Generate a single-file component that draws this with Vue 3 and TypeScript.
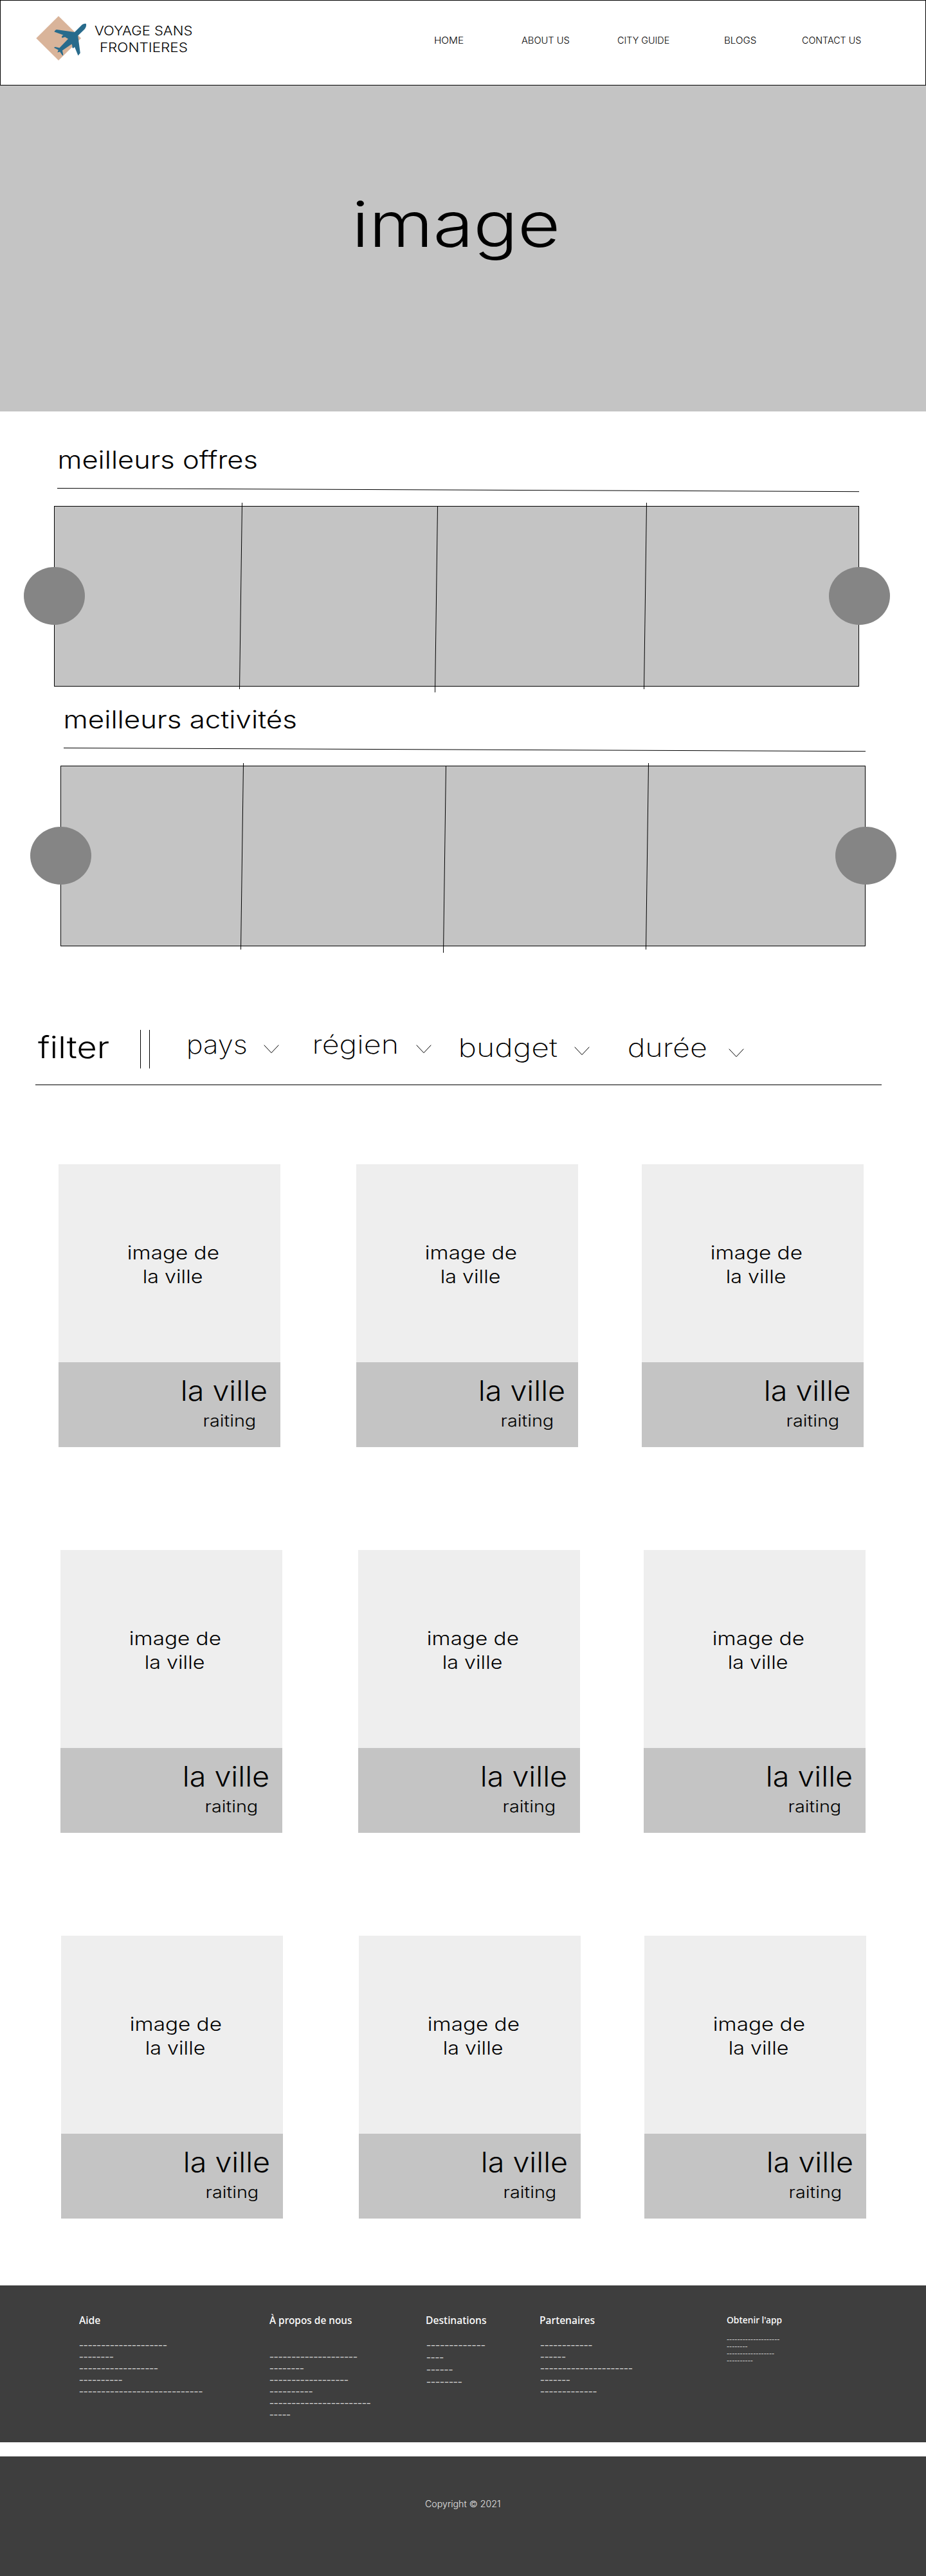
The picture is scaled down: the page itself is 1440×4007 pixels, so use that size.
<script setup lang="ts">
import type { Directive } from 'vue'

// Stretches a line of text so that its ink spans exactly the given width.
const vFit: Directive<HTMLElement, number> = {
  mounted(el, binding) {
    const ctx = document.createElement('canvas').getContext('2d')
    if (!ctx) return
    const cs = getComputedStyle(el)
    ctx.font = `${cs.fontWeight} ${cs.fontSize} ${cs.fontFamily}`
    const m = ctx.measureText((el.textContent ?? '').trim())
    const ink = m.actualBoundingBoxLeft + m.actualBoundingBoxRight
    const scale = binding.value / ink
    el.style.width = `${binding.value}px`
    el.style.transform = `translateX(${m.actualBoundingBoxLeft * scale}px) scaleX(${scale})`
  },
}

interface Line { x1: number; y1: number; x2: number; y2: number }
interface Carousel { id: string; title: string; width: number; lines: Line[] }

const nav = [
  { id: 'home', label: 'HOME', width: 45 },
  { id: 'about', label: 'ABOUT US', width: 74 },
  { id: 'guide', label: 'CITY GUIDE', width: 81 },
  { id: 'blogs', label: 'BLOGS', width: 48.5 },
  { id: 'contact', label: 'CONTACT US', width: 91.5 },
]

const carousels: Carousel[] = [
  {
    id: 'offers', title: 'meilleurs offres', width: 306,
    lines: [
      { x1: 292.5, y1: 5, x2: 288.5, y2: 295 },
      { x1: 596.5, y1: 10, x2: 592.5, y2: 300 },
      { x1: 921.5, y1: 5, x2: 917.5, y2: 295 },
    ],
  },
  {
    id: 'activities', title: 'meilleurs activités', width: 358,
    lines: [
      { x1: 284.5, y1: 6, x2: 280.5, y2: 296 },
      { x1: 599.5, y1: 11, x2: 595.5, y2: 301 },
      { x1: 914.5, y1: 6, x2: 910.5, y2: 296 },
    ],
  },
]

const filters = [
  { id: 'country', label: 'pays', width: 89.5 },
  { id: 'region', label: 'régien', width: 127 },
  { id: 'budget', label: 'budget', width: 150 },
  { id: 'duration', label: 'durée', width: 119.5 },
]

const footer = [
  { id: 'help', title: 'Aide', width: 33.5, pitch: 6.93, gap: 2, rows: [20, 8, 18, 10, 28] },
  { id: 'us', title: 'À propos de nous', width: 128, pitch: 6.93, gap: 2, rows: [20, 8, 18, 10, 23, 5] },
  { id: 'places', title: 'Destinations', width: 93, pitch: 7.2, gap: 2, rows: [13, 4, 6, 8] },
  { id: 'partners', title: 'Partenaires', width: 84.5, pitch: 6.93, gap: 2, rows: [12, 6, 21, 7, 13] },
  { id: 'app', title: "Obtenir l'app", width: 85.5, pitch: 4.16, gap: 1, rows: [20, 8, 18, 10] },
]
</script>

<template>
  <div class="page">
    <header class="top">
      <svg class="logo" width="80" height="72" viewBox="56 24 80 72">
        <path fill="#d9b49a" d="M91 25 126 59.5 91 94 56.300 59.5Z" />
        <path
          fill="#286b8c"
          d="M133.900 37.300C132.500 36.300 129 37 126.500 39.500L116 50 88 46C86 46.500 85 48 84.500 49.500L98.500 54.500C96 55.500 95.500 57.500 96.500 59L101 57.500 106 60.500 92.500 74.500 86 73C84.800 73.200 84.300 73.800 84 74.300L90.800 77.800 89.300 81.500 93.200 80.500 97.300 86.600 98.300 85.500 97 78.500 111.500 68.500 112.500 71.500C112 73.500 112.500 75 114 75L116 73 121.500 86.500 124.800 82.500 121.200 55.500 131.500 45.500C134 42.500 134.500 39.500 133.900 37.300Z"
        />
      </svg>
      <div class="brand">
        <span v-fit="151.5">VOYAGE SANS</span>
        <span v-fit="135" class="second">FRONTIERES</span>
      </div>
      <nav class="nav">
        <a v-for="n in nav" :key="n.id" v-fit="n.width" :class="n.id">{{ n.label }}</a>
      </nav>
    </header>

    <section class="hero"><h1 v-fit="312">image</h1></section>

    <section v-for="c in carousels" :key="c.id" class="carousel" :class="c.id">
      <h2 v-fit="c.width">{{ c.title }}</h2>
      <svg class="rule" width="1247" height="7"><line x1="0" y1="0.5" x2="1247" y2="5.700" stroke="#000" /></svg>
      <div class="track">
        <svg class="dividers" width="1252" height="310">
          <line v-for="(l, i) in c.lines" :key="i" v-bind="l" stroke="#000" />
        </svg>
        <i class="knob left"></i>
        <i class="knob right"></i>
      </div>
    </section>

    <section class="filters">
      <h3 v-fit="110">filter</h3>
      <div class="bars"></div>
      <div v-for="f in filters" :key="f.id" class="filter" :class="f.id">
        <span v-fit="f.width">{{ f.label }}</span>
        <svg width="24" height="14" viewBox="0 0 24 14"><path d="M.7.7 12 12.700 23.300.7" fill="none" stroke="#000" /></svg>
      </div>
    </section>

    <section v-for="row in 3" :key="row" class="cities" :class="'row' + row">
      <article v-for="col in 3" :key="col" class="city">
        <div class="photo">
          <span v-fit="141">image de</span>
          <span v-fit="90.5">la ville</span>
        </div>
        <div class="caption">
          <strong v-fit="130">la ville</strong>
          <small v-fit="78.5">raiting</small>
        </div>
      </article>
    </section>

    <footer class="links">
      <div v-for="c in footer" :key="c.id" class="col" :class="c.id">
        <h4 v-fit="c.width">{{ c.title }}</h4>
        <p v-for="(n, i) in c.rows" :key="i" v-fit="n * c.pitch - c.gap">{{ '-'.repeat(n) }}</p>
      </div>
    </footer>
    <div class="copyright"><span v-fit="117">Copyright © 2021</span></div>
  </div>
</template>

<style>
body { margin: 0; background: #fff; }
</style>

<style scoped>
.page {
  width: 1440px;
  height: 4007px;
  overflow: hidden;
  display: flex;
  flex-direction: column;
  font-family: Inter, "Open Sans", sans-serif;
  font-kerning: normal;
  color: #000;
}
h1, h2, h3, h4, p { margin: 0; font-weight: 400; }
h1, h2, h3, h4, p, span, a, strong, small {
  display: block;
  flex: none;
  white-space: nowrap;
  transform-origin: 0 50%;
}

.top {
  box-sizing: border-box;
  height: 133px;
  border: 1px solid #000;
  display: flex;
  flex: none;
}
.logo { margin: 23px 0 0 55px; flex: none; }
.brand { margin: 34px 0 0 11px; width: 152px; font-size: 20.2px; line-height: 26px; font-weight: 300; flex: none; }
.brand .second { margin-left: 9px; }
.nav { display: flex; margin: 52px 0 0 377px; font-size: 13.8px; line-height: 20px; font-weight: 300; }
.about { margin-left: 89.500px; }
.guide { margin-left: 75px; }
.blogs { margin-left: 86.500px; }
.contact { margin-left: 71px; }

.hero {
  height: 507px;
  flex: none;
  background: #c4c4c4;
  padding-left: 554px;
  box-sizing: border-box;
}
.hero h1 { padding-top: 156px; font-size: 97.6px; line-height: 120px; font-weight: 300; }

.carousel { flex: none; }
.offers { padding-top: 55px; }
.activities { padding: 31px 0 0 10px; }
.carousel h2 { margin-left: 93px; font-size: 38px; line-height: 40px; font-weight: 300; }
.activities h2 { margin-left: 91.500px; }
.rule { display: block; margin: 24px 0 21px 89px; }
.track {
  position: relative;
  box-sizing: border-box;
  margin-left: 84px;
  width: 1252px;
  height: 281px;
  border: 1px solid #000;
  background: #c4c4c4;
}
.dividers { position: absolute; left: -1px; top: -11px; }
.knob { position: absolute; top: 94px; width: 95px; height: 90px; border-radius: 50%; background: #858585; }
.knob.left { left: -48px; }
.knob.right { right: -49px; }

.filters {
  display: flex;
  flex: none;
  box-sizing: border-box;
  width: 1316px;
  height: 86px;
  margin: 130px 0 0 55px;
  padding-left: 4px;
  border-bottom: 1px solid #000;
}
.filters h3 { font-size: 47px; line-height: 54px; font-weight: 300; }
.bars { box-sizing: border-box; width: 15px; height: 60px; margin-left: 49px; border: solid #000; border-width: 0 1px; }
.filter { display: flex; align-items: flex-start; font-size: 40px; line-height: 46px; font-weight: 200; }
.filter svg { margin-top: 23px; }
.country { margin-left: 60px; }
.country svg { margin-left: 27px; }
.region { margin-left: 55px; }
.region svg { margin-left: 31px; }
.budget { margin-left: 45px; padding-top: 5px; }
.budget svg { margin: 21px 0 0 27px; }
.duration { margin-left: 61px; padding-top: 5px; }
.duration svg { margin: 24px 0 0 36px; }

.cities { display: flex; flex: none; }
.row1 { margin: 123px 0 0 91px; }
.row2 { margin: 160px 0 0 94px; }
.row3 { margin: 160px 0 0 95px; }
.city { width: 345px; flex: none; }
.city:nth-child(2) { margin-left: 118px; }
.city:nth-child(3) { margin-left: 99px; }
.photo {
  box-sizing: border-box;
  height: 308px;
  padding: 119px 0 0 12px;
  background: #eee;
  display: flex;
  flex-direction: column;
  align-items: center;
  font-size: 29px;
  line-height: 37px;
  font-weight: 300;
}
.caption {
  box-sizing: border-box;
  height: 132px;
  padding: 19px 22px 0 0;
  background: #c4c4c4;
  display: flex;
  flex-direction: column;
  align-items: flex-end;
}
.caption strong { font-size: 43px; line-height: 50px; font-weight: 300; }
.caption small { margin: 9px 18px 0 0; font-size: 24px; line-height: 28px; font-weight: 300; }

.links {
  height: 244px;
  flex: none;
  box-sizing: border-box;
  margin-top: 104px;
  padding: 44px 0 0 123px;
  background: #3e3e3e;
  display: flex;
  font-family: "Noto Sans", "Open Sans", sans-serif;
  color: #ddd;
}
.col { flex: none; font-size: 16px; }
.col h4 { font-size: 15.5px; line-height: 20px; height: 20px; margin-bottom: 19px; font-weight: 500; color: #fff; }
.col p { line-height: 18px; }
.help { width: 296px; }
.us { width: 243.500px; }
.us h4 { margin-bottom: 37px; }
.places { width: 177px; }
.places p { line-height: 19px; }
.partners { width: 290px; }
.app { font-size: 10px; }
.app h4 { font-size: 14px; margin-bottom: 14px; }
.app p { line-height: 11px; }

.copyright {
  flex: none;
  height: 186px;
  box-sizing: border-box;
  margin-top: 22px;
  padding: 64px 0 0 661px;
  background: #3e3e3e;
  color: #e4e4e4;
  font-size: 14px;
  line-height: 20px;
  font-weight: 300;
}
</style>
